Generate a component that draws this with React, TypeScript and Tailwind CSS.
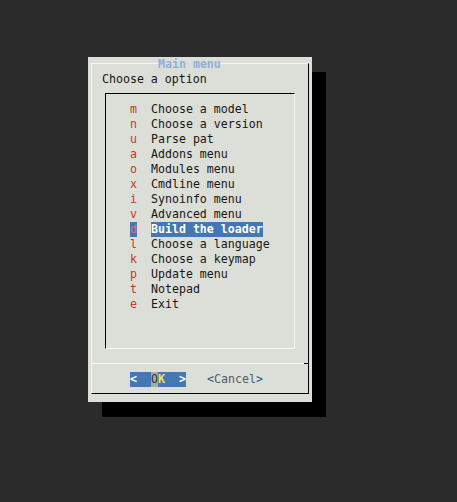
const ITEMS = [
  ['m', 'Choose a model'],
  ['n', 'Choose a version'],
  ['u', 'Parse pat'],
  ['a', 'Addons menu'],
  ['o', 'Modules menu'],
  ['x', 'Cmdline menu'],
  ['i', 'Synoinfo menu'],
  ['v', 'Advanced menu'],
  ['d', 'Build the loader'],
  ['l', 'Choose a language'],
  ['k', 'Choose a keymap'],
  ['p', 'Update menu'],
  ['t', 'Notepad'],
  ['e', 'Exit'],
];

const SELECTED = 8;

export default function App() {
  return (
    <div className="min-h-[502px] w-full bg-[#2b2b2b] pl-[88px] pt-[57px] font-['DejaVu_Sans_Mono',monospace] text-[11.6px] leading-[15px] text-[#161616]">
      <div className="h-[345px] w-[224px] bg-[#dcded8] pb-[8px] pl-[3px] pr-[3px] pt-[6px] shadow-[14px_15px_0_0_#000]">
        {/* outer frame */}
        <div className="flex h-full flex-col border border-b-black border-l-[#f7f7f5] border-r-black border-t-[#f7f7f5]">
          <div className="-mt-[7px] ml-[66px] h-[15px] w-[63px] bg-[#dcded8] font-bold text-[#8bb2de]">
            Main menu
          </div>
          <div className="ml-[10px] h-[15px]">Choose a option</div>

          {/* list box */}
          <div className="ml-[13px] mt-[6px] h-[256px] w-[190px] border border-b-[#f7f7f5] border-l-black border-r-[#f7f7f5] border-t-black pl-[24px] pt-[8px]">
            {ITEMS.map(([key, label], i) => {
              const sel = i === SELECTED;
              return (
                <div key={key} className="flex h-[15px] whitespace-pre">
                  <span
                    className={`w-[7px] ${sel ? 'bg-[#4279b5] text-[#f0627a]' : 'text-[#d0331f]'}`}
                  >
                    {key}
                  </span>
                  <span className="w-[14px]" />
                  <span className={sel ? 'bg-[#4279b5] font-bold text-white' : ''}>{label}</span>
                </div>
              );
            })}
          </div>

          {/* separator */}
          <div className="mt-[14px] flex h-px">
            <div className="flex-1 bg-[#f7f7f5]" />
            <div className="w-[4px] bg-black" />
          </div>

          {/* buttons */}
          <div className="mt-[8px] flex h-[15px] whitespace-pre pl-[38px]">
            <div className="flex bg-[#4279b5]">
              <span className="w-[21px] font-bold text-white">{'<'}</span>
              <span className="w-[7px] bg-[#a9a9a7] text-[#333]">O</span>
              <span className="w-[21px] font-bold text-[#f4e15a]">K</span>
              <span className="w-[7px] font-bold text-white">{'>'}</span>
            </div>
            <div className="ml-[21px] flex">
              <span className="text-[#2b5a8e]">{'<'}</span>
              <span className="text-[#4f5d66]">Cancel</span>
              <span className="text-[#2b5a8e]">{'>'}</span>
            </div>
          </div>
        </div>
      </div>
    </div>
  );
}
